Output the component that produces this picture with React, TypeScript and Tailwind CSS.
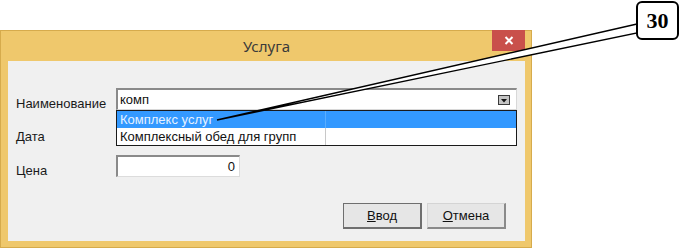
import React from "react";

const ui = "font-['Liberation_Sans',Arial,sans-serif]";

function Label({ children }: { children: React.ReactNode }) {
  return (
    <div className="w-[100px] shrink-0 pt-[8px] text-[13px] leading-[15px] text-[#1a1a1a]">
      {children}
    </div>
  );
}

export default function App() {
  return (
    <div className={`relative w-[681px] h-[248px] bg-white overflow-hidden ${ui}`}>
      <div className="pt-[30px]">
        <div className="w-[532px] h-[218px] bg-[#efc86c] border border-[#d6ab4c] flex flex-col">
          {/* title bar */}
          <div className="h-[30px] flex pl-[7px] pr-[6px]">
            <div className="w-[33px] shrink-0" />
            <div className="flex-1 flex items-center justify-center font-['Noto_Sans',sans-serif] text-[15px] text-[#3a3a3a]">
              Услуга
            </div>
            <div className="w-[33px] h-[21px] -mt-[1px] bg-[#c9504b] flex items-center justify-center text-white">
              <svg width="10" height="9" viewBox="0 0 10 9">
                <path d="M1.5 1 L8.5 8 M8.5 1 L1.5 8" stroke="white" strokeWidth="2" />
              </svg>
            </div>
          </div>
          {/* client */}
          <div className="relative ml-[7px] mr-[6px] h-[180px] bg-[#f0f0f0] pt-[27px] pl-[8px]">
            <div className="flex h-[22px]">
              <Label>Наименование</Label>
              <div className="w-[401px] h-[22px] bg-white border-t-2 border-l-2 border-[#8a8a8a] border-r border-b border-r-[#d8d8d8] border-b-[#d8d8d8] flex items-center justify-between">
                <span className="pl-[2px] text-[13px] text-[#111]">комп</span>
                <div className="mr-[6px] w-[12px] h-[10px] bg-[#3a3a3a] p-[1px]">
                  <div className="w-full h-full bg-[#c4c4c4] flex items-end justify-center pb-[1px]">
                    <svg width="6" height="4" viewBox="0 0 6 4">
                      <path d="M0 0 H6 L3 3.5 Z" fill="#111" />
                    </svg>
                  </div>
                </div>
              </div>
            </div>
            <div className="flex h-[22px] mt-[11px]">
              <Label>Дата</Label>
            </div>
            <div className="flex h-[22px] mt-[12px]">
              <Label>Цена</Label>
              <div className="w-[124px] h-[22px] bg-white border-t-2 border-l-2 border-[#8a8a8a] border-r border-b border-r-[#dcdcdc] border-b-[#dcdcdc] flex items-center justify-end pr-[4px] text-[13px] text-[#111]">
                0
              </div>
            </div>
            <div className="flex justify-end gap-[5px] pr-[19px] mt-[26px]">
              <button className="w-[79px] h-[26px] bg-[#e6e6e6] border border-[#6f6f6f] border-r-2 border-b-2 text-[13px] text-[#111]">
                <span className="underline">В</span>вод
              </button>
              <button className="w-[79px] h-[26px] bg-[#e6e6e6] border-t border-l border-[#d4d4d4] border-r-2 border-b-2 border-r-[#8a8a8a] border-b-[#8a8a8a] text-[13px] text-[#111]">
                <span className="underline">О</span>тмена
              </button>
            </div>
            {/* dropdown popup */}
            <div className="absolute left-[108px] top-[49px] w-[401px] border border-[#1a1a1a] bg-white text-[13px]">
              <div className="flex h-[17px] bg-[#3399ff]">
                <div className="w-[209px] pl-[3px] leading-[17px] text-[#e6f2ff] border-r border-[#5aaeff]">
                  Комплекс услуг
                </div>
              </div>
              <div className="flex h-[17px]">
                <div className="w-[209px] pl-[3px] leading-[17px] text-[#111] border-r border-[#c8c8c8]">
                  Комплексный обед для групп
                </div>
              </div>
            </div>
          </div>
        </div>
      </div>
      {/* callout */}
      <svg className="absolute left-0 top-0 pointer-events-none" width="681" height="248">
        <polygon points="637,24 217,120 637,33" fill="white" stroke="black" strokeWidth="1.4" strokeLinejoin="miter" />
      </svg>
      <div className="absolute left-[636px] top-[1px] w-[43px] h-[39px] rounded-[6px] border-2 border-black bg-white flex items-center justify-center font-['Liberation_Serif',serif] font-bold text-[22px] text-black">
        30
      </div>
    </div>
  );
}
